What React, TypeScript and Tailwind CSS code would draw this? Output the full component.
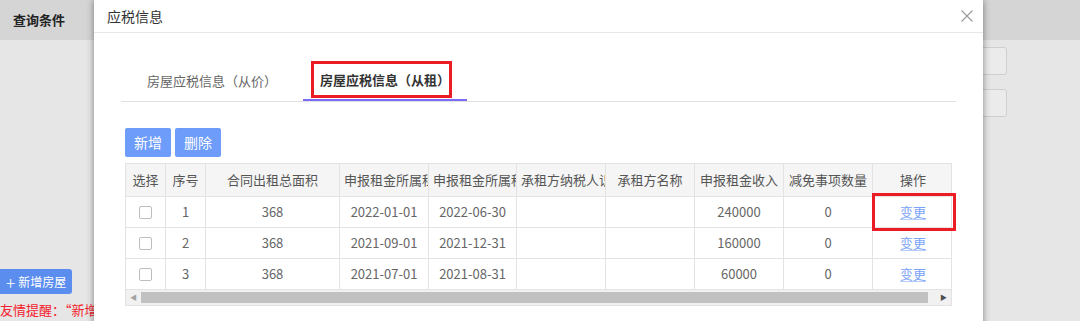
const cols = [40, 40, 134, 89, 88, 89, 89, 89, 89, 80];

const headers = [
  "选择",
  "序号",
  "合同出租总面积",
  "申报租金所属租期起",
  "申报租金所属租期止",
  "承租方纳税人识别号",
  "承租方名称",
  "申报租金收入",
  "减免事项数量",
  "操作",
];

const rows = [
  { no: "1", area: "368", start: "2022-01-01", end: "2022-06-30", income: "240000", count: "0" },
  { no: "2", area: "368", start: "2021-09-01", end: "2021-12-31", income: "160000", count: "0" },
  { no: "3", area: "368", start: "2021-07-01", end: "2021-08-31", income: "60000", count: "0" },
];

function Cell({ w, children, clip }: { w: number; children?: React.ReactNode; clip?: boolean }) {
  return (
    <div
      style={{ width: w }}
      className={
        "flex shrink-0 items-center overflow-hidden whitespace-nowrap border-r border-[#e3e3e3] last:border-r-0 " +
        (clip ? "justify-start pl-[4px]" : "justify-center")
      }
    >
      {children}
    </div>
  );
}

export default function App() {
  return (
    <div className="relative h-[321px] w-[1080px] overflow-hidden bg-[#e6e6e6] font-['Noto_Sans_CJK_SC','Noto_Sans',sans-serif]">
      {/* page behind the dialog */}
      <div className="flex h-[40px] items-center bg-[#d5d5d5] pl-[13px] text-[13px] font-bold text-[#222]">
        查询条件
      </div>
      <div className="flex flex-col items-end gap-[14px] pr-[73px] pt-[7px]">
        <div className="h-[28px] w-[300px] rounded-[3px] border border-[#cfcfcf] bg-[#ebebeb]" />
        <div className="h-[28px] w-[300px] rounded-[3px] border border-[#cfcfcf] bg-[#ebebeb]" />
      </div>
      <div className="mt-[152px] flex flex-col items-start">
        <button className="flex h-[25px] w-[72px] items-center justify-center gap-[3px] rounded-r-[3px] bg-[#5b8def] text-[12px] text-white">
          <span className="text-[18px] font-light leading-none">+</span>新增房屋
        </button>
        <div className="mt-[6px] whitespace-nowrap text-[13px] text-[#f5222d]">友情提醒：“新增房屋”</div>
      </div>

      {/* dialog */}
      <div className="absolute left-[94px] top-0 h-[340px] w-[889px] bg-white shadow-[0_0_7px_rgba(0,0,0,0.45)]">
        <div className="flex h-[33px] items-center justify-between border-b border-[#e8e8e8] pl-[13px] pr-[8px]">
          <span className="text-[14px] text-[#333]">应税信息</span>
          <svg width="14" height="14" viewBox="0 0 14 14" className="mr-[1px]">
            <path d="M1.5 1.5 L12.5 12.5 M12.5 1.5 L1.5 12.5" stroke="#9a9a9a" strokeWidth="1.1" fill="none" />
          </svg>
        </div>

        <div className="px-[27px]">
          <div className="mt-[28px] flex h-[41px] border-b border-[#e0e0e0]">
            <div className="flex w-[182px] items-center justify-center text-[13px] text-[#666]">房屋应税信息（从价）</div>
            <div className="relative flex w-[164px] items-center justify-center border-b-2 border-[#7a6cf5] text-[13px] font-bold text-[#333]">
              房屋应税信息（从租）
              <div className="absolute left-[8px] top-[0px] h-[37px] w-[141px] border-[3px] border-[#ec1c24]" />
            </div>
          </div>
        </div>

        <div className="px-[31px]">
          <div className="mt-[26px] flex gap-[4px]">
            <button className="h-[29px] w-[46px] rounded-[2px] bg-[#6d9cfb] text-[14px] text-white">新增</button>
            <button className="h-[29px] w-[46px] rounded-[2px] bg-[#6d9cfb] text-[14px] text-white">删除</button>
          </div>

          <div className="mt-[6px] w-[827px] border border-[#e3e3e3] text-[13px] text-[#666]">
            <div className="flex h-[33px] border-b border-[#e3e3e3] bg-[#f5f5f5] text-[#555]">
              {headers.map((h, i) => (
                <Cell key={h} w={cols[i]} clip={i >= 3 && i <= 5}>
                  {h}
                </Cell>
              ))}
            </div>
            {rows.map((r, idx) => (
              <div key={r.no} className="flex h-[31px] border-b border-[#e3e3e3]">
                <Cell w={cols[0]}>
                  <span className="block h-[13px] w-[13px] rounded-[2px] border border-[#bdbdbd] bg-white" />
                </Cell>
                <Cell w={cols[1]}>{r.no}</Cell>
                <Cell w={cols[2]}>{r.area}</Cell>
                <Cell w={cols[3]}>{r.start}</Cell>
                <Cell w={cols[4]}>{r.end}</Cell>
                <Cell w={cols[5]} />
                <Cell w={cols[6]} />
                <Cell w={cols[7]}>{r.income}</Cell>
                <Cell w={cols[8]}>{r.count}</Cell>
                <div className="relative flex w-[80px] shrink-0 items-center justify-center">
                  <span className="text-[#7ba3f7] underline decoration-[#b5cdfb] underline-offset-2">变更</span>
                  {idx === 0 && (
                    <div className="absolute left-[-1px] top-[-4px] h-[38px] w-[84px] border-[3px] border-[#ec1c24]" />
                  )}
                </div>
              </div>
            ))}
            <div className="flex h-[15px] items-center bg-[#f1f1f1]">
              <span className="flex w-[15px] justify-center text-[7px] leading-none text-[#a3a3a3]">◀</span>
              <div className="h-[11px] flex-1 bg-[#c1c1c1]" />
              <span className="w-[8px]" />
              <span className="flex w-[15px] justify-center text-[7px] leading-none text-[#505050]">▶</span>
            </div>
          </div>
        </div>
      </div>
    </div>
  );
}
